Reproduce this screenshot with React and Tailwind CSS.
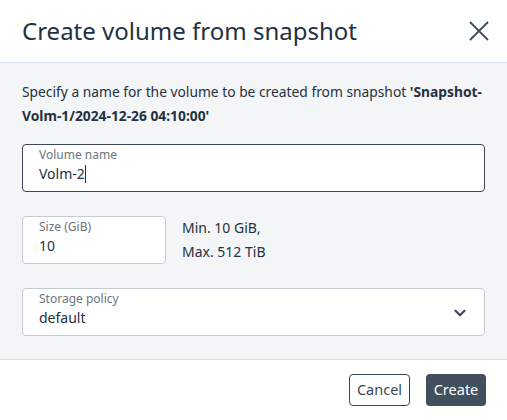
import { X, ChevronDown } from "lucide-react";

export default function App() {
  return (
    <div className="w-[507px] h-[420px] bg-white flex flex-col text-[#243142]" style={{ fontFamily: "'Noto Sans', 'Open Sans', sans-serif" }}>
      {/* header */}
      <div className="h-[63px] flex items-center justify-between pl-[22px] pr-[11px] border-b border-[#d6dfe9] shrink-0">
        <h1 className="text-[24px] leading-none">Create volume from snapshot</h1>
        <X className="w-[34px] h-[34px] text-[#3c4a5a]" strokeWidth={1.25} />
      </div>

      {/* body */}
      <div className="bg-[#f4f5f7] px-[22px] pt-[17px] h-[297px] border-b border-[#d6dfe9] shrink-0">
        <p className="text-[13.8px] leading-[24px]">
          Specify a name for the volume to be created from snapshot <span className="font-bold">'Snapshot-Volm-1/2024-12-26 04:10:00'</span>
        </p>

        <div className="mt-[16px] h-[48px] bg-white border border-[#3c4756] rounded-[4px] px-[16px] pt-[2px]">
          <div className="text-[12px] leading-[16px] text-[#6b7480]">Volume name</div>
          <div className="text-[14px] leading-[22px] flex items-center">Volm-2<span className="inline-block w-px h-[18px] bg-[#243142]"></span></div>
        </div>

        <div className="mt-[24px] flex items-start">
          <div className="w-[144px] h-[48px] bg-white border border-[#c6ccd3] rounded-[4px] px-[16px] pt-[2px]">
            <div className="text-[12px] leading-[16px] text-[#6b7480]">Size (GiB)</div>
            <div className="text-[14px] leading-[22px]">10</div>
          </div>
          <div className="ml-[16px] text-[14px] leading-[24px]">
            <div>Min. 10 GiB,</div>
            <div>Max. 512 TiB</div>
          </div>
        </div>

        <div className="mt-[24px] h-[48px] bg-white border border-[#c6ccd3] rounded-[4px] pl-[16px] pr-[15px] pt-[2px] flex items-center justify-between">
          <div className="self-start">
            <div className="text-[12px] leading-[16px] text-[#6b7480]">Storage policy</div>
            <div className="text-[14px] leading-[22px]">default</div>
          </div>
          <ChevronDown className="w-[18px] h-[18px] text-[#3c4a5a]" strokeWidth={3} />
        </div>
      </div>

      {/* footer */}
      <div className="flex-1 flex items-center justify-end gap-[16px] pr-[21px]">
        <button className="h-[32px] w-[61px] border border-[#3c4756] rounded-[4px] bg-white text-[14.5px] text-[#3c4756]">Cancel</button>
        <button className="h-[32px] w-[60px] rounded-[4px] bg-[#424f5d] text-[14.5px] text-white">Create</button>
      </div>
    </div>
  );
}
